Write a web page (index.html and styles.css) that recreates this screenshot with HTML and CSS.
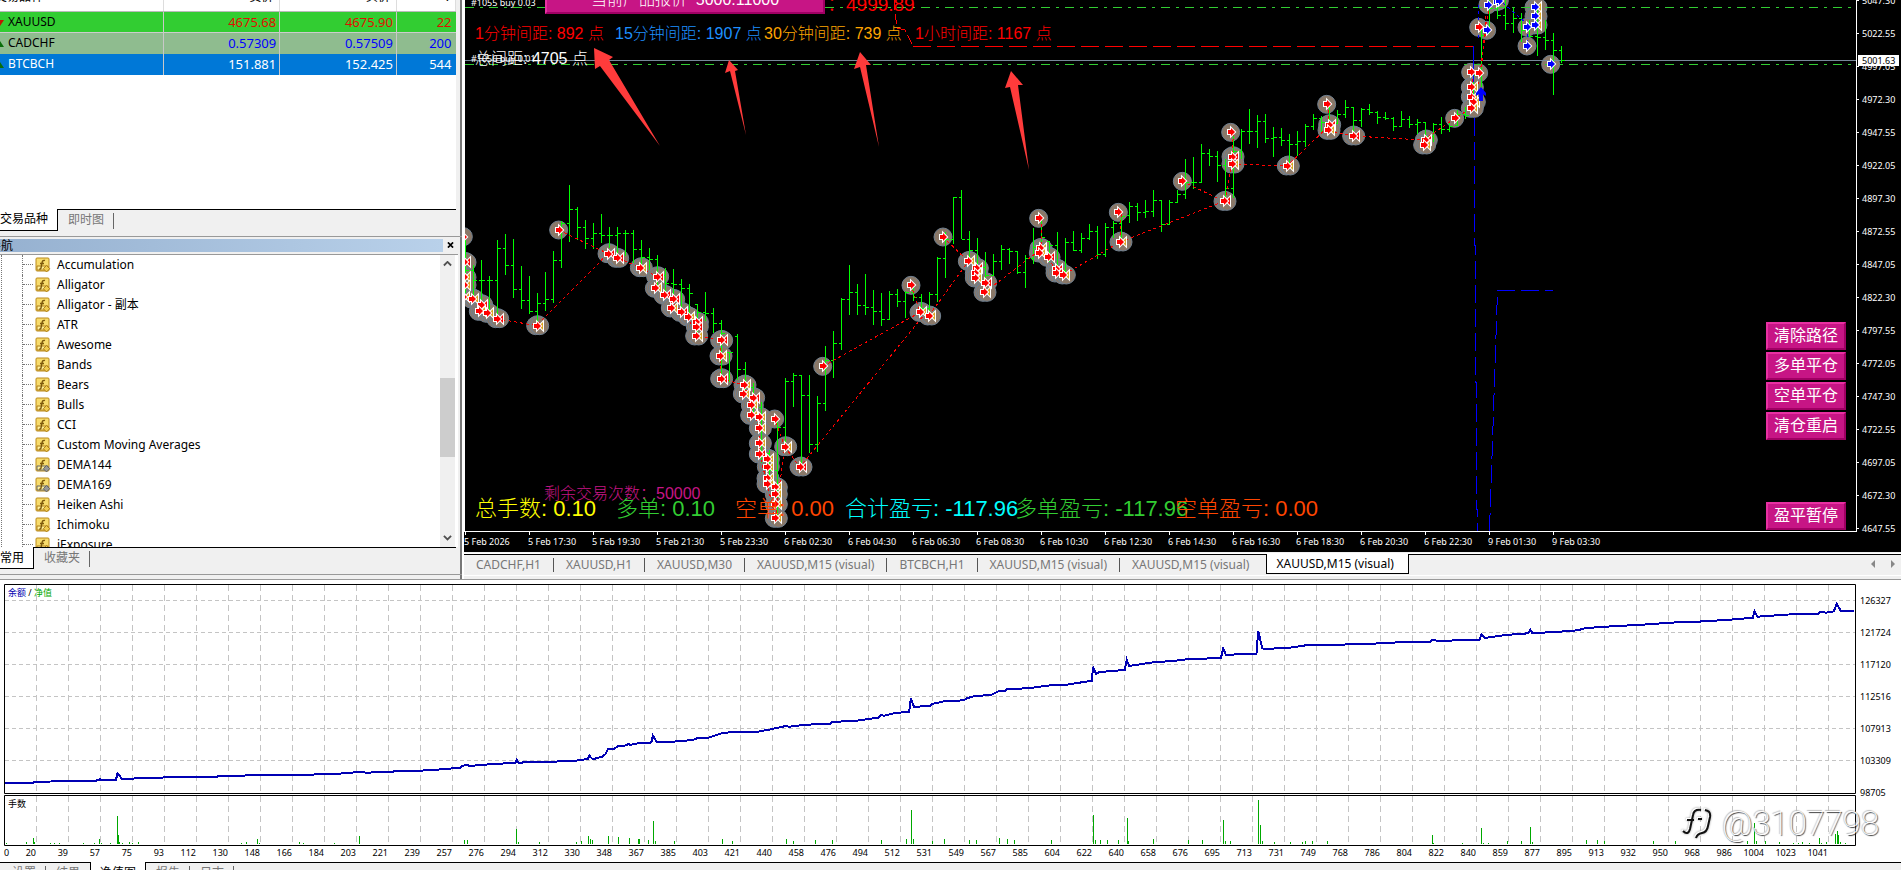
FILE: index.html
```html
<!DOCTYPE html>
<html lang="zh-CN">
<head>
<meta charset="utf-8">
<title>XAUUSD,M15 (visual)</title>
<link rel="stylesheet" href="styles.css">
</head>
<body>
<svg class="defs" aria-hidden="true">
  <defs>
    <symbol id="fx" viewBox="0 0 16 16">
      <rect x="1" y="1" width="13" height="13" rx="1" fill="#f8dc6c" stroke="#b98a1c"/>
      <path d="M2 9h11v4H2z" fill="#fff09a"/>
      <path d="M10 3.500q-2.400-.8-3 2.300L6 11q-.3 1.400-1.800 1M5 6.500h4" fill="none" stroke="#7d5a0c" stroke-width="1.400"/>
      <path class="gem" d="M11.500 8.500l3.200 3.200-3.200 3.200-3.200-3.200z"/>
    </symbol>
  </defs>
</svg>
<main class="workspace">
  <aside class="side">
    <section class="market">
      <div class="market-list">
        <table class="quotes">
          <thead><tr><th class="sym">交易品种</th><th>卖价</th><th>买价</th><th class="spread">!</th></tr></thead>
          <tbody>
            <tr class="up"><td><i class="mark down"></i>XAUUSD</td><td>4675.68</td><td>4675.90</td><td>22</td></tr>
            <tr class="flat"><td><i class="mark"></i>CADCHF</td><td>0.57309</td><td>0.57509</td><td>200</td></tr>
            <tr class="chosen"><td><i class="mark"></i>BTCBCH</td><td>151.881</td><td>152.425</td><td>544</td></tr>
          </tbody>
        </table>
      </div>
      <nav class="tabs"><button class="tab on">交易品种</button><button class="tab">即时图</button></nav>
    </section>
    <section class="navigator">
      <header class="nav-title"><h2>导航</h2><button class="close" aria-label="关闭"><svg viewBox="0 0 8 7"><path d="M1 .5l6 6M7 .5l-6 6"/></svg></button></header>
      <div class="nav-body">
        <ul class="tree" id="tree"></ul>
        <div class="scroll">
          <button aria-label="向上"><svg viewBox="0 0 10 6"><path d="M1 5l4-4 4 4"/></svg></button>
          <div class="track"><div class="thumb"></div></div>
          <button aria-label="向下"><svg viewBox="0 0 10 6"><path d="M1 1l4 4 4-4"/></svg></button>
        </div>
      </div>
      <nav class="tabs"><button class="tab on">常用</button><button class="tab">收藏夹</button></nav>
    </section>
  </aside>

  <section class="charts">
    <div class="chart">
      <div class="plot">
        <svg class="canvas" id="canvas"></svg>
        <span class="order o1">#1055 buy 0.03</span>
        <span class="order o2">#1056 buy 0.01</span>
        <button class="quote">当前产品报价&nbsp; 5000.11000</button>
        <span class="price-note">：4999.89</span>
        <p class="note gap1">1分钟间距: 892 点</p>
        <p class="note gap2">15分钟间距: 1907 点</p>
        <p class="note gap3">30分钟间距: 739 点</p>
        <p class="note gap4">1小时间距: 1167 点</p>
        <p class="note total">总间距: 4705 点</p>
        <p class="note left">剩余交易次数：50000</p>
        <p class="stat s1">总手数: 0.10</p>
        <p class="stat s2">多单: 0.10</p>
        <p class="stat s3">空单: 0.00</p>
        <p class="stat s4">合计盈亏: -117.96</p>
        <p class="stat s5">多单盈亏: -117.96</p>
        <p class="stat s6">空单盈亏: 0.00</p>
        <svg class="canvas" id="front"></svg>
        <div class="actions">
          <button>清除路径</button><button>多单平仓</button><button>空单平仓</button><button>清仓重启</button>
          <button class="apart">盈平暂停</button>
        </div>
      </div>
      <div class="prices" id="prices"></div>
      <div class="times" id="times"></div>
    </div>
    <nav class="chart-tabs">
      <button>CADCHF,H1</button><button>XAUUSD,H1</button><button>XAUUSD,M30</button><button>XAUUSD,M15 (visual)</button><button>BTCBCH,H1</button><button>XAUUSD,M15 (visual)</button><button class="last">XAUUSD,M15 (visual)</button><button class="on">XAUUSD,M15 (visual)</button>
      <span class="pager"><svg viewBox="0 0 24 8"><path d="M4 0v8L0 4zM20 0v8l4-4z"/></svg></span>
    </nav>
  </section>
</main>

<section class="tester">
  <div class="equity">
    <div class="equity-plot">
      <svg id="equity" viewBox="4 583 1852 262" preserveAspectRatio="none"></svg>
      <p class="legend"><b>余额</b> / <em>净值</em></p>
      <p class="legend lots">手数</p>
    </div>
    <div class="levels"><span>126327</span><span>121724</span><span>117120</span><span>112516</span><span>107913</span><span>103309</span><span>98705</span></div>
    <div class="trades" id="trades"></div>
  </div>
  <nav class="tabs report-tabs"><button class="tab">设置</button><button class="tab last">结果</button><button class="tab on">净值图</button><button class="tab">报告</button><button class="tab">日志</button></nav>
  <div class="watermark">
    <svg viewBox="0 0 30 34">
      <path d="M1 24Q6 29 8 22L11 8Q12 2 19 3M5 13h7M16 12h4M23 3Q29 4 28 10L26 19Q25 25 20 26T14 31"/>
    </svg>
    <span>@3107798</span>
  </div>
</section>
<script src="app.js"></script>
</body>
</html>
```
FILE: styles.css
```css
* { box-sizing: border-box; }
body {
  margin: 0; height: 100vh; overflow: hidden;
  display: flex; flex-direction: column;
  background: #f0f0f0; color: #000;
  font: 12px/20px "Noto Sans", "Noto Sans CJK SC", sans-serif;
}
button { font: inherit; color: inherit; border: 0; padding: 0; background: none; white-space: nowrap; }
p, h2, ul { margin: 0; padding: 0; }
.defs { position: absolute; width: 0; height: 0; }

.workspace { flex: 1; min-height: 0; display: grid; grid-template: minmax(0, 1fr) / 464px minmax(0, 1fr); }

.side { display: flex; flex-direction: column; min-height: 0; padding-bottom: 4px; border-right: 2px solid #fff; box-shadow: inset -2px 0 #777; }
.market { flex: 7 1 0; min-height: 0; display: flex; flex-direction: column; }
.market-list { flex: 1; min-height: 0; overflow: hidden; background: #fff; margin-right: 6px; }
.quotes { width: 100%; margin-top: -12px; border-collapse: collapse; table-layout: fixed; text-align: right; }
.quotes th { font-weight: 400; height: 23px; padding: 0 6px 5px 0; line-height: 18px; border-right: 1px solid #ddd; border-bottom: 1px solid #bbb; }
.quotes th.sym { width: 163px; text-align: left; padding-left: 0; text-indent: -5px; }
.quotes th.spread { width: 59px; }
.quotes td { height: 21px; padding: 0 3px 0 0; border-right: 1px solid #c8c8c8; line-height: 20px; font-size: 13px; }
.quotes td:first-child { text-align: left; padding-left: 8px; position: relative; font-size: 12px; }
.quotes td:last-child { border-right: 0; padding-right: 4px; }
.up { background: #32cd32; color: #e01000; border-bottom: 1px solid #ccc; }
.flat { background: #8fbc8f; color: #0000ff; }
.chosen { background: #0078d7; color: #fff; }
.up td:first-child, .flat td:first-child { color: #000; }
.mark { position: absolute; left: -4px; top: 8px; border: 4px solid transparent; border-top: 0; border-bottom: 6px solid #0a6e0a; }
.mark.down { border-bottom: 0; border-top: 6px solid #c01800; }

.tabs { flex: none; display: flex; margin-right: 6px; height: 27px; border-top: 1px solid #000; }
.tab { height: 20px; padding: 0 10px; color: #777; position: relative; }
.tab:not(.on):not(.last)::after { content: ""; position: absolute; right: 0; top: 3px; bottom: 1px; border-right: 1px solid #666; }
.tab.on { margin-top: -1px; height: 22px; padding: 0 9px 0 0; color: #000; background: #fff; border: solid #000; border-width: 0 1px 1px 0; }

.navigator { flex: 10 1 0; min-height: 0; display: flex; flex-direction: column; border-top: 1px solid #999; border-bottom: 1px solid #999; }
.nav-title { display: flex; height: 18px; padding: 2px 3px 2px 0; border-bottom: 1px solid #999; margin-right: 4px; }
.nav-title h2 { flex: 1; font: inherit; line-height: 13px; text-indent: -11px; background: linear-gradient(90deg, #96b1d0, #b9d1ea); margin-right: 4px; }
.close { width: 8px; display: flex; align-items: center; }
.close svg { width: 7px; height: 6px; fill: none; stroke: #000; stroke-width: 2; }
.nav-body { flex: 1; min-height: 0; display: flex; background: #fff; margin-right: 4px; padding-right: 3px; padding-left: 1px; }
.tree { flex: 1; overflow: hidden; list-style: none; border-left: 1px dotted #777; padding-left: 20px; }
.tree li { display: flex; align-items: center; height: 20px; border-left: 1px dotted #777; white-space: nowrap; }
.tree li::before { content: ""; width: 10px; border-top: 1px dotted #777; margin-right: 2px; }
.tree svg { width: 16px; height: 16px; margin-right: 6px; fill: #f0cc50; stroke: #b08018; }
.tree li.locked svg { fill: #999; stroke: #666; }
.scroll { width: 15px; display: flex; flex-direction: column; background: #f0f0f0; }
.scroll button { height: 18px; display: grid; place-items: center; }
.scroll svg { width: 9px; fill: none; stroke: #505050; stroke-width: 2; }
.track { flex: 1; display: flex; flex-direction: column; }
.track::before { content: ""; flex: 105; }
.track::after { content: ""; flex: 72; }
.thumb { flex: 78; background: #cdcdcd; }

.charts { min-width: 0; min-height: 0; display: flex; flex-direction: column; }
.chart { flex: 1; min-height: 0; display: grid; grid-template: minmax(0, 1fr) 20px / minmax(0, 1fr) 44px; background: #000; color: #fff; overflow: hidden; font-size: 9px; }
.plot { position: relative; border: solid #fff; border-width: 0 1px 1px; overflow: hidden; }
.canvas { position: absolute; inset: 0; width: 100%; height: 100%; pointer-events: none; }
.plot p, .plot > span { position: absolute; white-space: nowrap; }
.order { left: 6px; line-height: 12px; }
.o1 { top: -3px; }
.o2 { top: 53px; }
.quote { position: absolute; left: 80px; top: -16px; width: 280px; height: 30px; }
.quote, .actions button { background: #c71585; color: #fff; border: 2px solid; border-color: #e830a2 #a00064 #a00064 #e830a2; font: 16px/24px "Liberation Sans", "Noto Sans CJK SC", sans-serif; }
.plot .quote { font-weight: 300; padding-top: 2px; }
.price-note { left: 362px; top: -7px; color: red; font: 300 19px/24px "Liberation Sans", "Noto Sans CJK SC", sans-serif; }
.note { font: 300 16px/24px "Liberation Sans", "Noto Sans CJK SC", sans-serif; top: 22px; }
.gap1 { left: 10px; color: red; }
.gap2 { left: 150px; color: #1e90ff; }
.gap3 { left: 299px; color: orange; }
.gap4 { left: 450px; color: red; }
.total { left: 10px; top: 47px; color: #fff; }
.left { left: 79px; top: 482px; color: #c71585; }
.stat { top: 495px; font: 300 22px/28px "Liberation Sans", "Noto Sans CJK SC", sans-serif; }
.s1 { left: 10px; color: yellow; }
.s2 { left: 151px; color: limegreen; }
.s3 { left: 270px; color: orangered; }
.s4 { left: 380px; color: aqua; }
.s5 { left: 550px; color: limegreen; }
.s6 { left: 710px; color: orangered; }
.actions { position: absolute; right: 10px; bottom: 1px; display: flex; flex-direction: column; gap: 2px; }
.actions button { width: 80px; height: 28px; }
.actions .apart { margin-top: 60px; }
.prices { position: relative; overflow: hidden; display: flex; flex-direction: column; margin-left: -1px; }
.prices span { flex: none; height: 33px; line-height: 33px; padding-left: 6px; background: linear-gradient(#fff, #fff) 0 16px / 3px 1px no-repeat; }
.prices span:first-child { margin-top: -16px; }
.prices .now { position: absolute; left: 2px; top: 55px; width: 41px; height: 11px; background: #fff; color: #000; line-height: 11px; padding-left: 4px; font-weight: 400; }
.times { grid-column: 1 / -1; display: flex; overflow: hidden; }
.times span { flex: none; width: 64px; line-height: 19px; white-space: nowrap; background: linear-gradient(#fff, #fff) 1px 0 / 1px 3px no-repeat; }
.chart-tabs { flex: none; height: 25px; margin-top: 2px; display: flex; align-items: start; color: #777; border-top: 1px solid #000; box-shadow: 0 -1px #fff; position: relative; }
.chart-tabs::after { content: ""; position: absolute; left: 0; right: 0; bottom: 3px; border-bottom: 1px solid #fff; z-index: -1; }
.chart-tabs button { padding: 0 13px 0 12px; height: 18px; line-height: 20px; position: relative; }
.chart-tabs button:not(.on):not(.last)::after { content: ""; position: absolute; right: 0; top: 3px; height: 14px; border-right: 1px solid #555; }
.chart-tabs .last { padding-right: 17px; }
.chart-tabs .on { margin-top: -1px; height: 20px; padding: 0 14px 0 9px; color: #000; background: #fff; border: 1px solid #000; border-top: 0; }
.pager { margin: 5px 6px 0 auto; }
.pager svg { width: 24px; height: 8px; fill: #888; display: block; }

.tester { flex: none; position: relative; border-top: 1px solid #999; height: 291px; overflow: hidden; }
.equity { display: grid; grid-template: 262px 16px / minmax(0, 1fr) 45px; padding: 4px 0 0 4px; background: #fff; font-size: 9px; }
.equity-plot { position: relative; }
.equity-plot svg { width: 100%; height: 262px; display: block; }
.legend { position: absolute; left: 4px; top: 2px; line-height: 14px; }
.legend b, .legend em { font-style: normal; font-weight: 400; color: #0000b0; }
.legend em { color: #00a800; }
.lots { top: 213px; }
.levels { padding-top: 1px; margin-left: 4px; }
.levels span { display: block; line-height: 32px; }
.trades { display: flex; grid-column: 1 / -1; padding-right: 73px; line-height: 14px; }
.trades span { flex: 1 1 0; min-width: 0; display: flex; justify-content: flex-end; }
.trades span:first-child { justify-content: space-between; }
.trades i { font-style: normal; }
.report-tabs { margin: 0; padding-left: 2px; }
.report-tabs .on { padding: 0 9px; border-left-width: 1px; }
.watermark { position: absolute; right: 22px; bottom: 28px; display: flex; align-items: center; gap: 10px; color: #fff; font: 100 33px/36px Roboto, sans-serif; text-shadow: 1px 1px 1px #333, -1px -1px 1px #bbb; }
.watermark svg { width: 30px; height: 34px; fill: none; stroke: #111; stroke-width: 2; filter: drop-shadow(-1px -1px 0 #fff) drop-shadow(0 0 1px #999); }
```
FILE: app.js
```javascript
const NS = 'http://www.w3.org/2000/svg';
const byId = id => document.getElementById(id);
function add(parent, tag, attrs) {
  const n = document.createElementNS(NS, tag);
  for (const k in attrs) n.setAttribute(k, attrs[k]);
  parent.appendChild(n);
  return n;
}

// Navigator
const names = ['Accumulation', 'Alligator', 'Alligator - 副本', 'ATR', 'Awesome', 'Bands', 'Bears', 'Bulls', 'CCI', 'Custom Moving Averages', 'DEMA144', 'DEMA169', 'Heiken Ashi', 'Ichimoku', 'iExposure'];
byId('tree').innerHTML = names.map(n => `<li${n.startsWith('DEMA') ? ' class="locked"' : ''}><svg><use href="#fx"/></svg>${n}</li>`).join('');

// Axes
const prices = ['5047.30', '5022.55', '4997.05', '4972.30', '4947.55', '4922.05', '4897.30', '4872.55', '4847.05', '4822.30', '4797.55', '4772.05', '4747.30', '4722.55', '4697.05', '4672.30', '4647.55'];
byId('prices').innerHTML = prices.map(p => `<span>${p}</span>`).join('') + '<b class="now">5001.63</b>';
const times = ['5 Feb 2026', '5 Feb 17:30', '5 Feb 19:30', '5 Feb 21:30', '5 Feb 23:30', '6 Feb 02:30', '6 Feb 04:30', '6 Feb 06:30', '6 Feb 08:30', '6 Feb 10:30', '6 Feb 12:30', '6 Feb 14:30', '6 Feb 16:30', '6 Feb 18:30', '6 Feb 20:30', '6 Feb 22:30', '9 Feb 01:30', '9 Feb 03:30'];
byId('times').innerHTML = times.map(t => `<span>${t}</span>`).join('');
const trades = [20, 39, 57, 75, 93, 112, 130, 148, 166, 184, 203, 221, 239, 257, 276, 294, 312, 330, 348, 367, 385, 403, 421, 440, 458, 476, 494, 512, 531, 549, 567, 585, 604, 622, 640, 658, 676, 695, 713, 731, 749, 768, 786, 804, 822, 840, 859, 877, 895, 913, 932, 950, 968, 986, 1004, 1023, 1041];
byId('trades').innerHTML = trades.map((t, i) => `<span>${i ? '' : '<i>0</i>'}<i>${t}</i></span>`).join('');

// Price chart; bars hold high, low and close, eight pixels apart
const early = [[210,370,300],[285,385,330],[270,405,330],[318,430,330],[210,450,235],[192,315,286],[207,384,358],[288,417,391],[318,432,424],[370,462,400],[306,423,388],[243,398,271],[153,294,160],[45,216,118],[111,210,170],[150,236,205],[158,236,190],[132,218,196],[171,235,196],[171,260,190],[180,258,190],[180,280,238],[210,290,260],[234,300,268],[255,345,315],[295,375,340],[297,390,342],[327,420,355],[342,430,370],[402,500,425],[366,452,430],[414,490,460],[450,615,490],[545,635,499],[493,630,596],[576,670,650],[640,740,710],[695,880,850],[840,950,900],[745,1040,772],[624,835,633],[609,711,615],[615,890,675],[615,848,822],[678,846,700],[528,722,571],[484,624,520],[384,540,388],[285,435,366],[342,435,404],[312,435,412],[360,465,424],[369,468,448],[363,450,373],[357,410,394],[363,444,366],[355,392,382],[372,430,414],[366,440,373],[262,396,264],[187,324,208],[82,222,82],[60,208,206],[183,270,240],[204,318,290],[246,370,316],[252,318,273],[225,300,237],[234,282,243],[243,312,307],[255,354,264],[174,282,230],[150,250,200],[212,275,226],[186,320,300],[205,318,217],[183,243,241],[189,249,205],[162,210,184],[168,267,253],[159,261,172],[152,204,160],[138,215,135],[96,159,108],[99,152,127],[90,144,124],[60,140,91],[90,186,162],[90,165,97],[60,100,73]].map(b => b.map(v => 170 + v / 3));
const late = [[159,199,182],[157,189,182],[144,183,153],[149,166,156],[151,182,165],[159,201,188],[133,198,151],[129,159,131],[109,144,131],[115,148,121],[114,143,138],[127,157,137],[128,146,140],[134,164,144],[131,156,141],[124,147,126],[114,130,118],[116,133,122],[105,133,124],[110,123,114],[100,118,107],[107,135,120],[108,127,109],[104,115,112],[111,124,117],[112,120,118],[117,131,126],[111,127,119],[116,128,124],[119,134,122],[122,143,136],[123,142,124],[117,134,129],[123,132,126],[110,125,114],[107,119,115],[73,110,75],[29,87,35],[0,33,8],[0,19,15],[0,30,23],[8,33,18],[13,42,30],[20,37,36],[7,56,37],[20,50,40],[33,95,50],[46,63,60]];
const bars = early.concat(late);

// Trade marks: r single entry, x entry and exit, y entry and yellow exit, b and c the blue kinds
const marks = [];
function mark(ox, oy, list) { list.forEach(m => marks.push([ox + m[0] / 3 - 465, oy + m[1] / 3, m[2]])); }
mark(460, 170, [[10,200,'r'],[12,277,'x'],[12,322,'y'],[12,345,'y'],[10,380,'y'],[36,387,'y'],[62,404,'x'],[58,424,'y'],[82,430,'y'],[110,446,'x'],[230,467,'y'],[296,180,'r'],[444,251,'x'],[470,265,'x'],[541,293,'y'],[590,320,'x'],[586,355,'y'],[612,376,'x'],[638,388,'x'],[634,414,'y'],[662,427,'x'],[684,441,'y'],[709,456,'x'],[709,470,'x'],[707,498,'y'],[782,511,'x'],[780,558,'y'],[782,626,'x'],[852,645,'y'],[850,672,'y'],[878,683,'x'],[874,706,'y'],[872,736,'y'],[898,742,'y'],[898,775,'y'],[898,820,'y'],[898,852,'x'],[922,868,'y'],[922,890,'y'],[921,925,'y'],[921,942,'y'],[946,952,'y'],[946,973,'y'],[946,1003,'y'],[946,1045,'y'],[944,747,'r'],[974,830,'y'],[1020,891,'x'],[1088,589,'r'],[1353,346,'r'],[1380,427,'y'],[1406,438,'y'],[1449,201,'r']]);
mark(880, 170, [[265,274,'y'],[289,295,'x'],[286,310,'y'],[286,324,'y'],[314,338,'x'],[312,367,'y'],[476,145,'r'],[480,235,'y'],[478,249,'y'],[504,262,'x'],[528,297,'x'],[528,309,'x'],[550,315,'y'],[715,127,'r'],[720,216,'y'],[907,34,'r'],[1032,94,'x']]);
mark(1180, 0, [[152,397,'r'],[156,470,'x'],[156,492,'y'],[322,498,'y'],[440,313,'r'],[446,374,'x'],[444,391,'y'],[518,408,'x'],[736,420,'x'],[731,435,'y'],[824,355,'r'],[872,217,'r'],[896,219,'r'],[874,262,'y'],[874,290,'y'],[880,306,'y'],[874,325,'y'],[896,82,'r'],[920,91,'b'],[924,14,'b'],[950,5,'b'],[958,2,'b'],[1065,22,'c'],[1065,49,'c'],[1065,75,'c'],[1041,82,'b'],[1041,138,'b'],[1112,193,'b']]);

const cv = byId('canvas');
const line = (p, x1, y1, x2, y2, stroke, extra) => add(p, 'line', Object.assign({x1, y1, x2, y2, stroke, 'shape-rendering': 'crispEdges'}, extra));
for (const m of marks) {
  const shifts = 'rb'.includes(m[2]) ? [0] : [-1, 1, 3];
  for (const s of shifts) add(cv, 'circle', {cx: m[0] + s, cy: m[1] - (s === 1 ? 1 : 0), r: 9, fill: '#8a7868', stroke: '#708090'});
}
line(cv, 0, 7.5, '100%', 7.5, '#32cd32', {'stroke-dasharray': '9 6 3 6'});
line(cv, 0, 60.5, '100%', 60.5, '#778899');
line(cv, 0, 64.5, '100%', 64.5, '#32cd32', {'stroke-dasharray': '9 6 3 6'});
bars.forEach((b, i) => {
  const x = 8 * i + .5;
  const open = i ? bars[i - 1][2] : b[0];
  const inside = v => Math.min(b[1], Math.max(b[0], v));
  add(cv, 'path', {d: `M${x} ${b[0]}V${b[1]}M${x - 3} ${Math.round(inside(open)) + .5}h3M${x} ${Math.round(inside(b[2])) + .5}h3`, stroke: '#00ff00', fill: 'none', 'shape-rendering': 'crispEdges'});
});
const trails = [
  [460,170,110,446,230,467,444,251],[460,170,296,180,444,251,541,293,590,320,590,355,638,400,684,441,709,498,782,511,782,626,852,645,874,706,898,775,898,852,922,942,946,1045,974,830,944,747],
  [460,170,974,830,1020,891,1396,430],[460,170,1088,589,1380,427,1353,346],[460,170,1406,438,1525,274],[460,170,1449,201,1525,274,1549,300,1574,367],
  [880,170,314,367,480,240],[880,170,484,145,484,235,528,300,550,315,720,216,724,127],[880,170,720,216,1032,94],[880,170,907,34,1032,94],
  [1180,0,135,603,156,492,160,397],[1180,0,156,492,322,498,444,380,448,313],[1180,0,444,391,518,408,731,420,824,355,874,325,880,220],[1180,0,880,325,900,219,928,14],[1180,0,904,219,918,40]];
for (const t of trails) {
  const pts = [];
  for (let i = 2; i < t.length; i += 2) pts.push([t[0] + t[i] / 3 - 465, t[1] + t[i + 1] / 3]);
  add(cv, 'polyline', {points: pts.join(' '), fill: 'none', stroke: '#f00', 'stroke-dasharray': '3 3', 'shape-rendering': 'crispEdges'});
}
const dashed = (points, stroke, dash) => add(cv, 'polyline', {points, fill: 'none', stroke, 'stroke-dasharray': dash, 'shape-rendering': 'crispEdges'});
dashed('429,0 431,20 432,28 440,30 448,46', '#f00', '10 4');
dashed('448,46.500 1008,46.500', '#f00', '18 6');
dashed('1008.500,46 1008.500,82', '#00f', 'none');
dashed('1009.500,118 1009.500,245 1010.500,245 1010.500,382 1011.500,382 1011.500,509 1012.500,509 1012.500,531', '#00f', '18 6');
dashed('1024.500,531 1032.500,290.500 1088,290.500', '#00f', '18 6');
dashed('1038,3 1062,24 1062,50', '#00f', '3 3');
dashed('1013.500,5 1013.500,40', '#00f', '3 3');
for (const m of marks) {
  const blue = 'bc'.includes(m[2]);
  const g = add(cv, 'g', {transform: `translate(${Math.round(m[0])} ${Math.round(m[1])})`});
  if (!'rb'.includes(m[2])) add(g, 'path', {d: 'M2 0L6-4V4z', fill: m[2] === 'x' ? '#f00' : '#daa520', stroke: '#fff', 'stroke-width': 2, 'paint-order': 'stroke'});
  add(g, 'path', {d: 'M-3-2H0V-4L4 0 0 4V2H-3z', fill: blue ? '#00f' : '#f00', stroke: '#fff', 'stroke-width': 2, 'paint-order': 'stroke'});
}
add(cv, 'path', {d: 'M1016 87l5 6v3l-3-2v7h-4v-7l-3 2v-3z', fill: '#00f'});

// Hand-drawn pointers
const front = byId('front');
for (const p of ['594,48 595,69 600,66 660,146 609,60 613,57', '729,60 725,73 730,71 746,135 735,71 738,70', '860,52 854,69 860,67 879,147 866,65 871,65', '1011,71 1005,88 1010,87 1029,170 1018,85 1023,85'])
  add(front, 'polygon', {points: p, fill: '#ff3b3b', transform: 'translate(-465 0)'});

// Balance graph
const eq = byId('equity');
const fixed = {'vector-effect': 'non-scaling-stroke'};
for (let x = 36; x < 1850; x += 32) for (const [a, b] of [[584, 792], [795, 844]]) line(eq, x + .5, a, x + .5, b, '#c4c4c4', {'stroke-dasharray': '6 4', ...fixed});
for (let y = 599; y < 790; y += 32) line(eq, 5, y + .5, 1855, y + .5, '#c4c4c4', {'stroke-dasharray': '4 3', ...fixed});
for (const [y, h] of [[583.5, 209], [794.5, 50]]) add(eq, 'rect', {x: 4.5, y, width: 1851, height: h, fill: 'none', stroke: '#000', ...fixed});
const balance = [
  [0,12,636,80,636,84,632,165,631,235,629,245,625,250,627,284,626,288,607,299,624,340,622,415,619,532,617,535,615,628,613,755,611,830,608,880,603,900,605,975,601,1030,599,1070,596,1110,592,1128,590,1133,585,1145,581,1150,585,1200,580,1240,577,1263,576,1266,567,1272,577,1285,573,1355,572,1410,569,1440,564,1444,554,1452,565,1475,557,1483,550,1490,534,1505,533,1516,524,1530,524,1540,519],
  [630,0,522,22,516,48,516,53,511,56,494,65,512,105,512,155,507,165,501,192,500,225,487,250,483,270,484,310,483,345,475,382,465,390,467,425,462,452,460,490,458,495,453,555,449,608,440,615,432,622,434,650,426,684,422,688,383,696,408,735,404,740,399,770,391,818,388,825,382,845,375,885,372,903,361,918,361,924,354,975,352,1030,343,1070,341,1132,329,1134,287,1142,309,1150,303,1212,297,1217,266,1223,285,1282,274,1330,270,1365,265,1405,263,1448,260,1453,233,1460,251,1500,250,1535,248,1539,179,1549,232],
  [1261,8,234,70,230,110,223,230,220,295,217,350,213,415,212,420,206,430,209,510,208,535,206,540,190,548,201,600,192,655,187,660,176,665,187,745,181,775,178,797,171,860,166,950,160,1000,155,1090,151,1160,145,1205,140,1209,121,1216,137,1310,129,1365,128,1370,123,1385,125,1403,121,1411,98,1420,119,1453,120]];
const path = [];
for (const s of balance) for (let i = 1; i < s.length; i += 2) path.push([(s[0] + s[i] / 2.45).toFixed(1), (570 + s[i + 1] / 3).toFixed(1)]);
add(eq, 'polyline', {points: path.join(' '), fill: 'none', stroke: '#0000b4', 'stroke-width': 2, 'shape-rendering': 'crispEdges', ...fixed});
const lots = [
  [0,16,817,65,813,82,801,84,812,123,816,133,816,146,816,204,816,231,816,244,804,248,815,270,816,288,735,290,792,294,812,300,816,317,813,324,816,339,813,591,816,604,813,631,804,636,816,734,813,743,816,819,816,881,795,1138,807,1145,807,1265,774,1270,813,1322,813,1412,813,1425,810,1442,795,1446,804,1452,807,1491,795,1515,798,1542,801,1566,804],
  [630,22,804,45,807,57,750,62,810,109,810,226,804,250,810,383,804,400,810,454,807,496,807,616,807,677,804,689,717,694,804,741,810,770,804,832,807,849,807,905,801,925,804,942,807,1033,807,1135,732,1140,807,1152,807,1170,807,1197,807,1218,741,1221,810,1282,804,1368,807,1403,807,1453,747,1459,810,1471,810,1540,687,1544,762,1549,810],
  [1261,3,810,33,813,72,813,101,813,109,810,126,810,163,810,420,792,423,816,493,816,540,771,544,815,557,816,604,810,638,810,660,768,665,813,797,807,825,807,841,810,961,810,1015,810,1192,810,1209,756,1214,810,1236,810,1271,813,1304,816,1317,816,1327,813,1344,816,1368,801,1373,815,1385,813,1407,790,1412,780,1414,792,1420,813,1432,816]];
for (const s of lots) for (let i = 1; i < s.length; i += 2) {
  const x = Math.floor(s[0] + s[i] / 2.45) + .5;
  line(eq, x, 570 + s[i + 1] / 3, x, 843, '#00a800', fixed);
}
```
